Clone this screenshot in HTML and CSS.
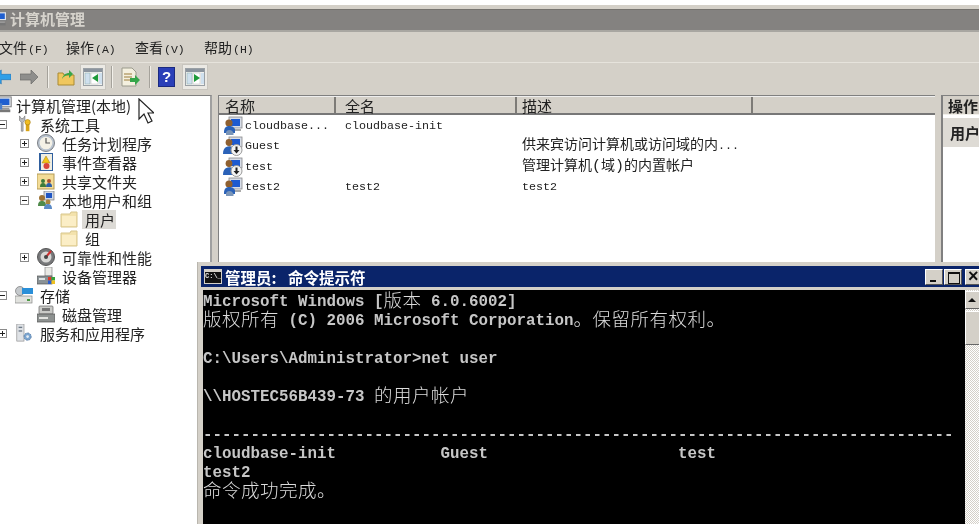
FILE: index.html
```html
<!DOCTYPE html>
<html lang="zh-CN">
<head>
<meta charset="utf-8">
<title>计算机管理</title>
<link rel="stylesheet" href="styles.css">
</head>
<body>
<svg class="defs" width="0" height="0" aria-hidden="true">
  <symbol id="i-monitor" viewBox="0 0 20 20"><rect x="3" y="1" width="15" height="11" fill="#dfe3ea" stroke="#777"/><rect x="5" y="3" width="11" height="7" fill="#1f5fd0"/><rect x="6" y="13" width="10" height="2" fill="#999"/><rect x="2" y="15" width="15" height="3" fill="#777"/><rect x="0" y="8" width="8" height="7" fill="#4d7fc7"/></symbol>
  <symbol id="i-user" viewBox="0 0 20 20"><rect x="6" y="1" width="13" height="11" fill="#d7dde8" stroke="#888" stroke-width=".8"/><rect x="8" y="3" width="9" height="7" fill="#1d5ad0"/><rect x="10" y="13" width="8" height="2" fill="#aaa"/><circle cx="6" cy="7" r="3.600" fill="#8f6030"/><path d="M1 16c0-4 2-6 5-6s6 1.500 6 4v3H1z" fill="#2b62b8"/><path d="M3 17c0-2 1.500-3 3.500-3s3 1 4 3v2H3z" fill="#7a95b8"/></symbol>
  <symbol id="i-userdown" viewBox="0 0 20 20"><rect x="6" y="1" width="13" height="10" fill="#d7dde8" stroke="#888" stroke-width=".8"/><rect x="8" y="3" width="9" height="6" fill="#1d5ad0"/><circle cx="6" cy="6.500" r="3.400" fill="#8f6030"/><path d="M0 18c0-5 2-7.500 6-7.500s5 2.500 5 7.500z" fill="#2b62b8"/><circle cx="13.500" cy="14" r="5.500" fill="#f4f4f4" stroke="#999"/><path d="M12.500 10.500h2v3.500h2l-3 3.500-3-3.500h2z" fill="#222"/></symbol>
  <symbol id="i-tools" viewBox="0 0 18 20"><path d="M4 1v5l2 2v10h2V8l2-2V1L8 4H6z" fill="#b9bcc0" stroke="#666" stroke-width=".6"/><rect x="11" y="9" width="4" height="9" fill="#d9a416"/><circle cx="13" cy="8" r="3" fill="#f0bd22" stroke="#9a7410" stroke-width=".6"/></symbol>
  <symbol id="i-clock" viewBox="0 0 18 18"><circle cx="9" cy="9" r="8.500" fill="#b9c3cf" stroke="#7b7f85"/><circle cx="9" cy="9" r="6.300" fill="#f4f1e6"/><path d="M9 4v5h4" fill="none" stroke="#555" stroke-width="1.200"/></symbol>
  <symbol id="i-event" viewBox="0 0 18 18"><rect x="2" y="0" width="14" height="18" fill="#2f5f9e"/><rect x="4" y="1" width="11" height="16" fill="#f0eee2"/><path d="M9 3l4 7H5z" fill="#f2c318" stroke="#a08010" stroke-width=".5"/><circle cx="9.500" cy="13" r="3" fill="#d8453c"/></symbol>
  <symbol id="i-share" viewBox="0 0 18 18"><rect x="0" y="2" width="17" height="15" fill="#f3dc97" stroke="#b49b56"/><circle cx="6" cy="9" r="2" fill="#3d7b3a"/><path d="M3 15c0-3 1-4 3-4s3 1 3 4z" fill="#3d7b3a"/><circle cx="12" cy="9" r="2" fill="#a8512f"/><path d="M9 15c0-3 1-4 3-4s3 1 3 4z" fill="#2e5fa8"/></symbol>
  <symbol id="i-group" viewBox="0 0 18 18"><rect x="7" y="0" width="10" height="9" fill="#cfd8e6" stroke="#777" stroke-width=".7"/><rect x="9" y="2" width="6" height="5" fill="#1f56c4"/><circle cx="5" cy="7" r="3" fill="#9d7335"/><path d="M1 15c0-4 1.500-5 4-5s4 1 4 5z" fill="#4f8a4a"/><circle cx="11" cy="11" r="2.500" fill="#a8843d"/><path d="M7 18c0-4 2-5 4-5s4 1 4 5z" fill="#5b8ac5"/></symbol>
  <symbol id="i-folder" viewBox="0 0 18 18"><path d="M1 4h9l1-2h6v15H1z" fill="#f3e2ac" stroke="#d8c68c"/><rect x="2" y="6" width="14" height="10" fill="#fbeec6"/></symbol>
  <symbol id="i-perf" viewBox="0 0 18 18"><circle cx="9" cy="9" r="8.500" fill="#77787a" stroke="#555"/><circle cx="9" cy="9" r="5.500" fill="#d8d8d6"/><path d="M9 9l5-6" stroke="#d03030" stroke-width="2"/><circle cx="9" cy="9" r="2" fill="#444"/></symbol>
  <symbol id="i-device" viewBox="0 0 18 18"><rect x="8" y="0" width="7" height="9" fill="#e9e9e5" stroke="#888" stroke-width=".7"/><rect x="0" y="9" width="15" height="8" fill="#8a9296" stroke="#555" stroke-width=".7"/><rect x="2" y="11" width="6" height="2" fill="#dfe3e3"/><rect x="11" y="10" width="3.500" height="3.500" fill="#d93a2b"/><rect x="14.500" y="10" width="3.500" height="3.500" fill="#35a33a"/><rect x="11" y="13.500" width="3.500" height="3.500" fill="#2a5fd0"/><rect x="14.500" y="13.500" width="3.500" height="3.500" fill="#efc020"/></symbol>
  <symbol id="i-storage" viewBox="0 0 18 18"><circle cx="5" cy="5" r="4.500" fill="#c5c9cc" stroke="#777" stroke-width=".7"/><rect x="7" y="2" width="11" height="6" fill="#2a8fd8"/><rect x="0" y="10" width="17" height="7" fill="#e1e2de" stroke="#888" stroke-width=".7"/><rect x="12" y="13" width="3" height="2" fill="#4d9a45"/></symbol>
  <symbol id="i-disk" viewBox="0 0 18 18"><rect x="2" y="1" width="14" height="8" rx="1" fill="#c9cac7" stroke="#666" stroke-width=".7"/><rect x="5" y="3" width="8" height="3" fill="#777"/><rect x="0" y="9" width="18" height="8" fill="#8d9190" stroke="#555" stroke-width=".7"/><rect x="2" y="12" width="9" height="2" fill="#e2e3e0"/></symbol>
  <symbol id="i-server" viewBox="0 0 18 20"><rect x="1" y="0" width="8" height="19" fill="#dfe2e6" stroke="#888" stroke-width=".7"/><rect x="3" y="3" width="4" height="1.500" fill="#6d7a88"/><rect x="3" y="7" width="4" height="1.500" fill="#6d7a88"/><circle cx="13" cy="14" r="4" fill="#7ba5d0" stroke="#5a7ea6" stroke-dasharray="2 1"/><circle cx="13" cy="14" r="1.500" fill="#e8eef5"/></symbol>
  <symbol id="i-panel" viewBox="0 0 20 20"><rect x=".5" y="1.500" width="19" height="17" fill="#f2f2ef" stroke="#9aa0a5"/><rect x="1" y="2" width="18" height="3" fill="#8b949e"/><rect x="2" y="6" width="5" height="11" fill="#cfe0ee" stroke="#8aa" stroke-width=".5"/><rect x="8" y="6" width="7" height="11" fill="#fff" stroke="#bbb" stroke-width=".5"/><rect x="16" y="6" width="3" height="11" fill="#cfe0ee"/></symbol>
</svg>

<div class="app">
  <div class="topstrip"></div>
  <header class="titlebar">
    <svg class="title-icon"><use href="#i-monitor"/></svg>
    <span>计算机管理</span>
  </header>

  <nav class="menubar">
    <span class="menu-item">文件<i>(F)</i></span>
    <span class="menu-item">操作<i>(A)</i></span>
    <span class="menu-item">查看<i>(V)</i></span>
    <span class="menu-item">帮助<i>(H)</i></span>
  </nav>

  <div class="toolbar">
    <svg class="tool back" viewBox="0 0 18 16"><path d="M0 8l7-8v5h11v6H7v5z" fill="#2f9fe8" stroke="#1c6fb5" stroke-width=".7"/></svg>
    <svg class="tool fwd" viewBox="0 0 18 16"><path d="M18 8l-7-7v4H0v6h11v4z" fill="#8e8e8c" stroke="#6a6a68" stroke-width=".7"/></svg>
    <span class="tsep"></span>
    <svg class="tool up" viewBox="0 0 18 18"><path d="M1 5h5l1 2h10v10H1z" fill="#f0c75e" stroke="#a98a34"/><path d="M5 11c1-4 4-6 7-6V2l4 4-4 4V7c-3 0-5 1-7 4z" fill="#3aa548"/></svg>
    <span class="tbtn"><svg class="panel"><use href="#i-panel"/></svg><svg class="mark" viewBox="0 0 6 8"><path d="M0 4l6-4v8z" fill="#1f9a3a"/></svg></span>
    <span class="tsep"></span>
    <svg class="tool export" viewBox="0 0 20 20"><path d="M2 1h10l4 4v14H2z" fill="#f4f0df" stroke="#9a9a8c"/><path d="M4 7h8M4 10h8M4 13h6" stroke="#9b7d3a"/><path d="M10 11h5V8l5 5-5 5v-3h-5z" fill="#35a64a"/></svg>
    <span class="tsep"></span>
    <span class="help">?</span>
    <span class="tbtn"><svg class="panel"><use href="#i-panel"/></svg><svg class="mark" viewBox="0 0 6 8"><path d="M6 4L0 0v8z" fill="#1f9a3a"/></svg></span>
  </div>

  <main class="panes">
    <section class="tree">
      <div class="row l0"><span class="tw"></span><svg class="ico big"><use href="#i-monitor"/></svg><span>计算机管理(本地)</span></div>
      <div class="row l1"><span class="tw minus"></span><svg class="ico"><use href="#i-tools"/></svg><span>系统工具</span></div>
      <div class="row l2"><span class="tw plus"></span><svg class="ico"><use href="#i-clock"/></svg><span>任务计划程序</span></div>
      <div class="row l2"><span class="tw plus"></span><svg class="ico"><use href="#i-event"/></svg><span>事件查看器</span></div>
      <div class="row l2"><span class="tw plus"></span><svg class="ico"><use href="#i-share"/></svg><span>共享文件夹</span></div>
      <div class="row l2"><span class="tw minus"></span><svg class="ico"><use href="#i-group"/></svg><span>本地用户和组</span></div>
      <div class="row l3"><span class="tw"></span><svg class="ico"><use href="#i-folder"/></svg><span class="sel">用户</span></div>
      <div class="row l3"><span class="tw"></span><svg class="ico"><use href="#i-folder"/></svg><span class="unsel">组</span></div>
      <div class="row l2"><span class="tw plus"></span><svg class="ico"><use href="#i-perf"/></svg><span>可靠性和性能</span></div>
      <div class="row l2"><span class="tw"></span><svg class="ico"><use href="#i-device"/></svg><span>设备管理器</span></div>
      <div class="row l1"><span class="tw minus"></span><svg class="ico"><use href="#i-storage"/></svg><span>存储</span></div>
      <div class="row l2"><span class="tw"></span><svg class="ico"><use href="#i-disk"/></svg><span>磁盘管理</span></div>
      <div class="row l1"><span class="tw plus"></span><svg class="ico"><use href="#i-server"/></svg><span>服务和应用程序</span></div>
    </section>

    <section class="list">
      <div class="lhead">
        <span class="c1">名称</span><span class="c2">全名</span><span class="c3">描述</span><span class="c4"></span>
      </div>
      <div class="lrow"><span class="c1"><svg class="uico"><use href="#i-user"/></svg>cloudbase...</span><span class="c2">cloudbase-init</span><span class="c3"></span></div>
      <div class="lrow"><span class="c1"><svg class="uico"><use href="#i-userdown"/></svg>Guest</span><span class="c2"></span><span class="c3 cn">供来宾访问计算机或访问域的内<b>...</b></span></div>
      <div class="lrow"><span class="c1"><svg class="uico"><use href="#i-userdown"/></svg>test</span><span class="c2"></span><span class="c3 cn">管理计算机<b class="paren">(</b>域<b class="paren">)</b>的内置帐户</span></div>
      <div class="lrow"><span class="c1"><svg class="uico"><use href="#i-user"/></svg>test2</span><span class="c2">test2</span><span class="c3">test2</span></div>
    </section>

    <aside class="actions">
      <div class="ahead">操作</div>
      <div class="asub">用户</div>
    </aside>
  </main>

  <svg class="cursor" viewBox="0 0 16 26"><path d="M1 1v20l5-5 4 9 4-2-4-8h6z" fill="#fff" stroke="#222" stroke-width="1.200"/></svg>

  <section class="console">
    <div class="con-title">
      <span class="con-icon">C:\_</span>
      <span class="con-name">管理员: 命令提示符</span>
      <span class="wbtn min"></span>
      <span class="wbtn max"></span>
      <span class="wbtn close">×</span>
    </div>
    <div class="con-body">
      <pre class="con-text">Microsoft Windows [<span class="zh">版本</span> 6.0.6002]
<span class="zh">版权所有</span> (C) 2006 Microsoft Corporation<span class="zh">。保留所有权利。</span>

C:\Users\Administrator&gt;net user

\\HOSTEC56B439-73 <span class="zh">的用户帐户</span>

-------------------------------------------------------------------------------
cloudbase-init           Guest                    test
test2
<span class="zh">命令成功完成。</span></pre>
      <div class="scrollbar">
        <span class="sb-up"></span>
        <span class="sb-thumb"></span>
      </div>
    </div>
  </section>
</div>
</body>
</html>
```

FILE: styles.css
```css
* { box-sizing: border-box; }
html, body { margin: 0; padding: 0; height: 100%; overflow: hidden; background: #d4d0c8; }
.defs { position: absolute; }

.app {
  position: relative;
  width: 979px;
  height: 524px;
  overflow: hidden;
  display: flex;
  flex-direction: column;
  background: #d4d0c8;
  font-family: "Noto Sans CJK SC", sans-serif;
  color: #222;
  filter: blur(.4px);
}

.topstrip { height: 9px; border-top: 5px solid #fff; background: #d4d0c8; flex: none; }

.titlebar {
  height: 23px;
  flex: none;
  display: flex;
  align-items: center;
  gap: 2px;
  padding-bottom: 3px;
  margin-bottom: 6px;
  background: #848280;
  color: #d6d3cc;
  font-size: 15px;
  font-weight: 700;
  border-top: 1px solid #75736f;
  border-bottom: 2px solid #a8a6a1;
}
.title-icon { width: 16px; height: 16px; margin-left: -8px; }

.menubar {
  height: 20px;
  flex: none;
  display: flex;
  align-items: center;
  gap: 20px;
  font-size: 14px;
  margin-bottom: 4px;
}
.menu-item { width: 49px; white-space: nowrap; line-height: 20px; }
.menu-item:first-child { width: 47px; margin-left: -1px; }
.menu-item i { font-family: "Liberation Mono", monospace; font-style: normal; font-size: 11.5px; margin-left: 1px; }

.toolbar {
  height: 29px;
  flex: none;
  display: flex;
  align-items: center;
  border-top: 1px solid #e6e3dc;
}
.tool { flex: none; }
.back { width: 16px; height: 18px; margin-left: -5px; }
.fwd { width: 18px; height: 16px; margin-left: 9px; }
.tsep { width: 2px; height: 22px; background: #a5a29b; border-right: 1px solid #f2f0ea; flex: none; }
.fwd + .tsep { margin-left: 9px; }
.up { width: 18px; height: 18px; margin-left: 8px; }
.tbtn {
  position: relative;
  width: 26px;
  height: 26px;
  flex: none;
  margin-left: 5px;
  display: flex;
  align-items: center;
  justify-content: center;
  background: #ebe9e4;
  border: 1px solid #c8c5be;
}
.panel { width: 20px; height: 20px; }
.mark { position: absolute; left: 11px; top: 9px; width: 6px; height: 8px; }
.tbtn + .tsep { margin-left: 5px; }
.export { width: 20px; height: 20px; margin-left: 7px; }
.export + .tsep { margin-left: 9px; }
.help {
  width: 17px;
  height: 20px;
  flex: none;
  margin-left: 7px;
  background: #2a3fb8;
  border: 1px solid #1b2a80;
  color: #fff;
  font: 700 15px/18px "Liberation Sans", sans-serif;
  text-align: center;
}
.help + .tbtn { margin-left: 7px; }

.panes { flex: 1; display: flex; gap: 6px; padding-top: 4px; min-height: 0; }

.tree {
  width: 212px;
  flex: none;
  background: #fff;
  border-top: 1px solid #808080;
  border-right: 2px solid #a0a0a0;
  font-size: 15px;
  line-height: 19px;
  overflow: hidden;
}
.row { display: flex; align-items: center; height: 19px; white-space: nowrap; }
.row:first-child { height: 18.500px; }
.l0 { margin-left: -22px; }
.l1 { margin-left: -2px; }
.l2 { margin-left: 20px; }
.l3 { margin-left: 43px; }
.tw { width: 9px; height: 9px; margin-right: 8px; flex: none; position: relative; }
.plus, .minus { border: 1px solid #8a8a8a; background: #fff; }
.plus::before, .minus::before { content: ""; position: absolute; left: 1px; top: 3px; width: 5px; height: 1px; background: #222; }
.plus::after { content: ""; position: absolute; left: 3px; top: 1px; width: 1px; height: 5px; background: #222; }
.ico { width: 18px; height: 18px; margin-right: 7px; flex: none; }
.ico.big { margin-right: 3px; }
.sel { background: #dcdad5; padding: 0 3px; margin-left: -3px; width: 34px; }

.list {
  flex: 1;
  min-width: 0;
  background: #fff;
  border-top: 1px solid #808080;
  border-left: 1px solid #808080;
  font-family: "Liberation Mono", monospace;
  font-size: 11.67px;
  color: #222;
}
.lhead {
  height: 19px;
  display: flex;
  background: #d4d0c8;
  border-bottom: 2px solid #777;
  border-top: 1px solid #eee;
  font-family: "Noto Sans CJK SC", sans-serif;
  font-size: 15px;
  line-height: 17px;
}
.lhead .c1, .lhead .c2, .lhead .c3 { border-right: 2px solid #7d7b77; }
.c1 { width: 117px; padding-left: 6px; flex: none; white-space: nowrap; }
.c2 { width: 181px; padding-left: 9px; flex: none; white-space: nowrap; }
.c3 { width: 236px; padding-left: 5px; flex: none; white-space: nowrap; }
.c4 { flex: 1; }
.lrow { height: 20.300px; display: flex; align-items: center; }
.lrow .c1 { display: flex; align-items: center; padding-left: 4px; }
.uico { width: 20px; height: 20px; margin-right: 2px; margin-left: 0; flex: none; }
.cn { font-family: "Noto Sans CJK SC", sans-serif; font-size: 14px; line-height: 14px; padding-bottom: 3px; }
.cn b { font-weight: 400; font-family: "Liberation Mono", monospace; font-size: 11.67px; }
.cn .paren { font-size: 15px; }
.lhead + .lrow { margin-top: 1px; }

.actions {
  width: 38px;
  flex: none;
  background: #fff;
  border-top: 1px solid #808080;
  border-left: 2px solid #808080;
  font-size: 15px;
  font-weight: 700;
  white-space: nowrap;
}
.ahead { height: 19px; background: #d4d0c8; padding-left: 5px; line-height: 20px; border-bottom: 1px solid #f2f0ea; overflow: hidden; }
.asub { height: 29px; background: #dedbd5; padding-left: 7px; margin-top: 3px; line-height: 30px; overflow: hidden; }

.cursor { position: absolute; left: 138px; top: 98px; width: 16px; height: 26px; }

.console {
  position: absolute;
  left: 197px;
  top: 262px;
  width: 790px;
  height: 270px;
  background: #d4d0c8;
  border-left: 1px solid #b9b6ae;
  padding: 4px 0 0 3px;
  display: flex;
  flex-direction: column;
}
.con-title {
  height: 21px;
  flex: none;
  display: flex;
  align-items: center;
  background: #0a246a;
  color: #fff;
  font-size: 15.500px;
  font-weight: 700;
  padding-left: 3px;
}
.con-icon {
  width: 18px;
  height: 15px;
  background: #111;
  border: 1px solid #d4d0c8;
  border-top-width: 3px;
  color: #e6e6e6;
  font: 700 7px/9px "Liberation Mono", monospace;
  overflow: hidden;
  margin-right: 3px;
  flex: none;
}
.con-name { width: 700px; flex: none; white-space: nowrap; word-spacing: 8px; }
.wbtn {
  width: 18px;
  height: 16px;
  flex: none;
  margin-right: 1px;
  background: #d4d0c8;
  border: 1px solid;
  border-color: #fff #555 #555 #fff;
  position: relative;
  color: #111;
}
.min::after { content: ""; position: absolute; left: 4px; bottom: 2px; width: 6px; height: 2px; background: #111; }
.max::after { content: ""; position: absolute; left: 3px; top: 2px; width: 10px; height: 9px; border: 1px solid #111; border-top-width: 2px; }
.close { margin-left: 2px; font: 700 18px/13px "Liberation Sans", sans-serif; padding-left: 2px; }

.con-body {
  flex: 1;
  display: flex;
  margin-top: 3px;
  min-height: 0;
  margin-left: 2px;
  background: #000;
}
.con-text {
  margin: 0;
  width: 762px;
  flex: none;
  padding: 3px 0 0 0;
  overflow: hidden;
  color: #c6c6c6;
  font-family: "Liberation Mono", monospace;
  font-weight: 700;
  font-size: 15.83px;
  line-height: 19px;
  white-space: pre;
}
.zh {
  font-family: "Noto Sans CJK SC", sans-serif;
  font-weight: 300;
  font-size: 18.500px;
  line-height: 1px;
  letter-spacing: .5px;
  vertical-align: -1px;
  color: #dcdcdc;
}
.scrollbar {
  width: 16px;
  flex: none;
  display: flex;
  flex-direction: column;
  gap: 2px;
  padding-top: 1px;
  background-color: #efeeea;
  background-image: repeating-conic-gradient(#d4d0c8 0 25%, #fff 0 50%);
  background-size: 2px 2px;
}
.sb-up {
  height: 18px;
  background: #d4d0c8;
  border: 1px solid;
  border-color: #fff #666 #666 #fff;
  position: relative;
}
.sb-up::after {
  content: "";
  position: absolute;
  left: 2px;
  top: 6px;
  border: 4px solid transparent;
  border-top-width: 0;
  border-bottom: 4px solid #111;
}
.sb-thumb {
  height: 34px;
  background: #d4d0c8;
  border: 1px solid;
  border-color: #fff #666 #666 #fff;
}
```
